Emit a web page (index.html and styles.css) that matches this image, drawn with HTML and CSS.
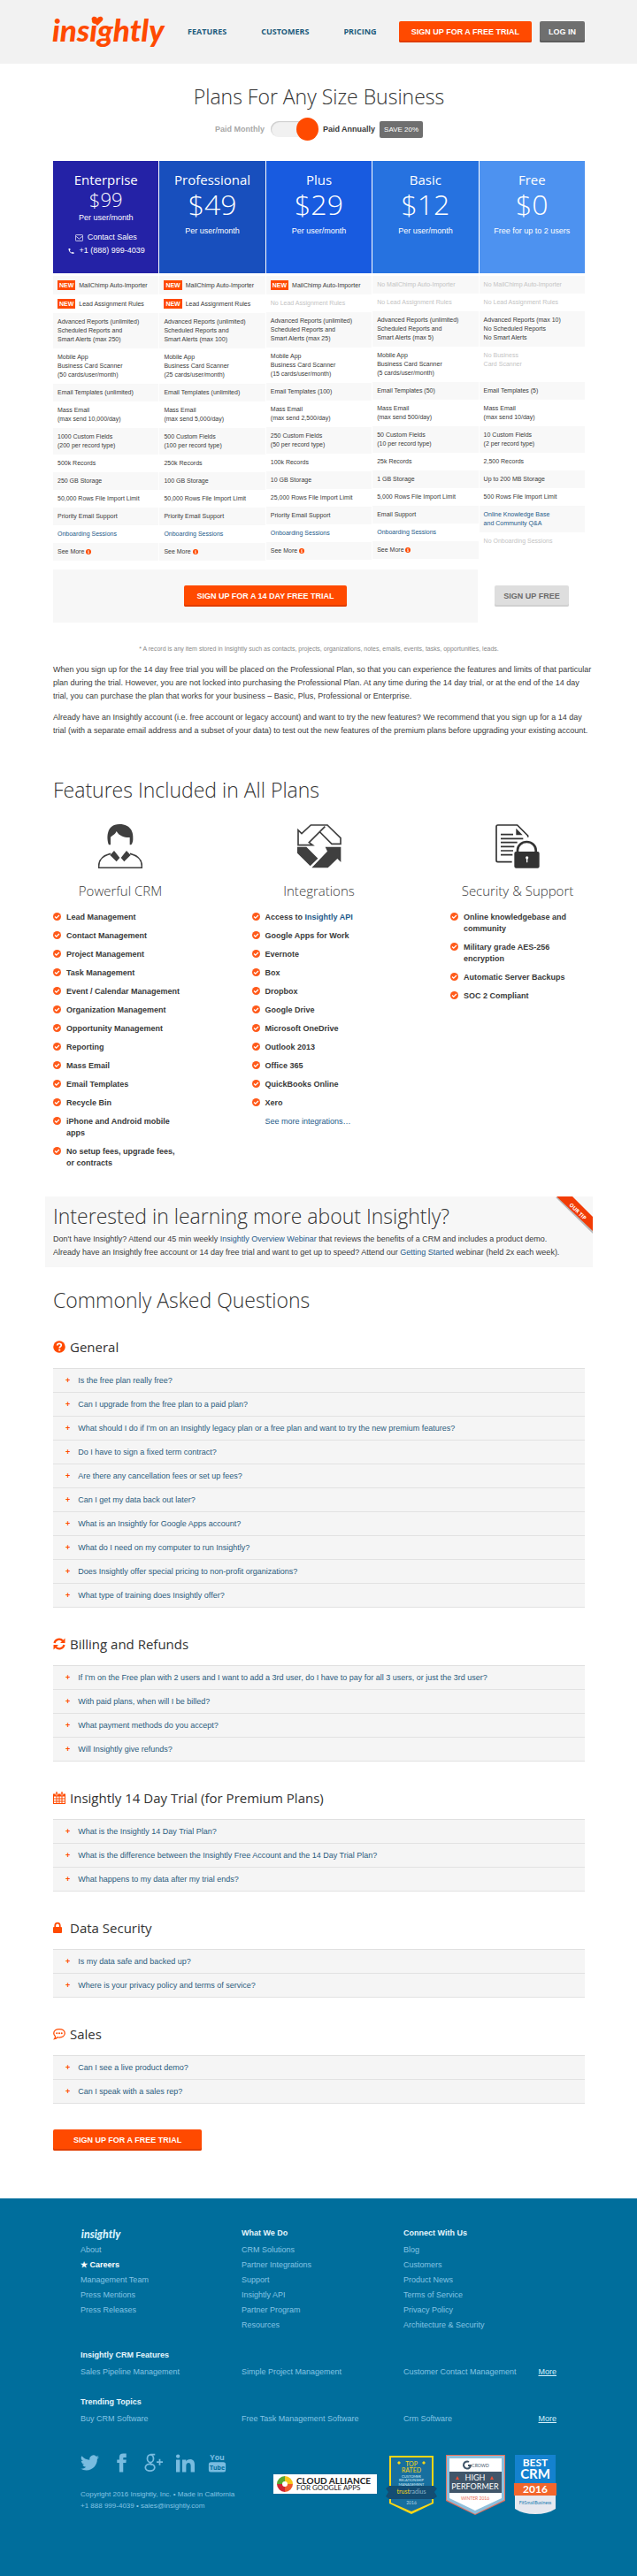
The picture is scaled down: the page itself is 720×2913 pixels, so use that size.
FILE: index.html
```html
<!DOCTYPE html>
<html lang="en">
<head>
<meta charset="utf-8">
<meta name="viewport" content="width=device-width, initial-scale=1">
<title>Insightly Pricing</title>
<link rel="stylesheet" href="styles.css">
</head>
<body>
<svg class="defs" aria-hidden="true">
  <symbol id="check" viewBox="0 0 24 24"><circle cx="12" cy="12" r="12" fill="currentColor"/><path d="M5.500 12l4.500 4.500L18.500 8" fill="none" stroke="#fff" stroke-width="3.500"/></symbol>
  <symbol id="info" viewBox="0 0 24 24"><circle cx="12" cy="12" r="12" fill="currentColor"/><path d="M10 5h4v4h-4zM8 10h6v7h2v2H8v-2h2v-5H8z" fill="#fff"/></symbol>
</svg>

<header class="header">
  <a class="logo" href="#" aria-label="Insightly">
    <svg viewBox="0 0 126 54"><text x="-1" y="38">insightly</text><path d="M50 20l-6-6c-2-4 4-6 6-2 2-4 8-2 6 2z"/></svg>
  </a>
  <nav class="nav"><a href="#">FEATURES</a><a href="#">CUSTOMERS</a><a href="#">PRICING</a></nav>
  <div class="actions"><a class="btn" href="#">SIGN UP FOR A FREE TRIAL</a><a class="btn dark" href="#">LOG IN</a></div>
</header>

<main class="main">
  <h1 class="title">Plans For Any Size Business</h1>
  <div class="billing">
    <span class="muted">Paid Monthly</span>
    <label class="switch"><input type="checkbox" checked aria-label="Paid annually"><span class="knob"></span></label>
    <span>Paid Annually</span><span class="save">SAVE 20%</span>
  </div>

  <section class="plans">
    <article class="plan">
      <header class="plan-head enterprise"><h2>Enterprise</h2><p class="price small">$99</p><p>Per user/month</p>
        <a class="contact first" href="#"><svg viewBox="0 0 24 20" fill="none" stroke="currentColor" stroke-width="2"><rect x="1" y="1" width="22" height="18" rx="2"/><path d="M2 5l10 8 10-8"/></svg>Contact Sales</a>
        <a class="contact" href="#"><svg viewBox="0 0 24 24"><path fill="currentColor" d="M6.600 10.800c1.400 2.800 3.800 5.100 6.600 6.600l2.200-2.200c.3-.3.7-.4 1-.2 1.100.4 2.300.6 3.600.6.600 0 1 .4 1 1V20c0 .6-.4 1-1 1C10.600 21 3 13.400 3 4c0-.6.4-1 1-1h3.500c.6 0 1 .4 1 1 0 1.200.2 2.400.6 3.600.1.300 0 .7-.2 1z"/></svg>+1 (888) 999-4039</a>
      </header>
      <ul>
        <li><b class="new">NEW</b> MailChimp Auto-Importer</li>
        <li><b class="new">NEW</b> Lead Assignment Rules</li>
        <li>Advanced Reports (unlimited)<br>Scheduled Reports and<br>Smart Alerts (max 250)</li>
        <li>Mobile App<br>Business Card Scanner<br>(50 cards/user/month)</li>
        <li>Email Templates (unlimited)</li>
        <li>Mass Email<br>(max send 10,000/day)</li>
        <li>1000 Custom Fields<br>(200 per record type)</li>
        <li>500k Records</li><li>250 GB Storage</li><li>50,000 Rows File Import Limit</li><li>Priority Email Support</li>
        <li><a href="#">Onboarding Sessions</a></li>
        <li>See More <svg class="info"><use href="#info"/></svg></li>
      </ul>
    </article>
    <article class="plan">
      <header class="plan-head professional"><h2>Professional</h2><p class="price">$49</p><p>Per user/month</p></header>
      <ul>
        <li><b class="new">NEW</b> MailChimp Auto-Importer</li>
        <li><b class="new">NEW</b> Lead Assignment Rules</li>
        <li>Advanced Reports (unlimited)<br>Scheduled Reports and<br>Smart Alerts (max 100)</li>
        <li>Mobile App<br>Business Card Scanner<br>(25 cards/user/month)</li>
        <li>Email Templates (unlimited)</li>
        <li>Mass Email<br>(max send 5,000/day)</li>
        <li>500 Custom Fields<br>(100 per record type)</li>
        <li>250k Records</li><li>100 GB Storage</li><li>50,000 Rows File Import Limit</li><li>Priority Email Support</li>
        <li><a href="#">Onboarding Sessions</a></li>
        <li>See More <svg class="info"><use href="#info"/></svg></li>
      </ul>
    </article>
    <article class="plan">
      <header class="plan-head plus"><h2>Plus</h2><p class="price">$29</p><p>Per user/month</p></header>
      <ul>
        <li><b class="new">NEW</b> MailChimp Auto-Importer</li>
        <li class="off">No Lead Assignment Rules</li>
        <li>Advanced Reports (unlimited)<br>Scheduled Reports and<br>Smart Alerts (max 25)</li>
        <li>Mobile App<br>Business Card Scanner<br>(15 cards/user/month)</li>
        <li>Email Templates (100)</li>
        <li>Mass Email<br>(max send 2,500/day)</li>
        <li>250 Custom Fields<br>(50 per record type)</li>
        <li>100k Records</li><li>10 GB Storage</li><li>25,000 Rows File Import Limit</li><li>Priority Email Support</li>
        <li><a href="#">Onboarding Sessions</a></li>
        <li>See More <svg class="info"><use href="#info"/></svg></li>
      </ul>
    </article>
    <article class="plan">
      <header class="plan-head basic"><h2>Basic</h2><p class="price">$12</p><p>Per user/month</p></header>
      <ul>
        <li class="off">No MailChimp Auto-Importer</li>
        <li class="off">No Lead Assignment Rules</li>
        <li>Advanced Reports (unlimited)<br>Scheduled Reports and<br>Smart Alerts (max 5)</li>
        <li>Mobile App<br>Business Card Scanner<br>(5 cards/user/month)</li>
        <li>Email Templates (50)</li>
        <li>Mass Email<br>(max send 500/day)</li>
        <li>50 Custom Fields<br>(10 per record type)</li>
        <li>25k Records</li><li>1 GB Storage</li><li>5,000 Rows File Import Limit</li><li>Email Support</li>
        <li><a href="#">Onboarding Sessions</a></li>
        <li>See More <svg class="info"><use href="#info"/></svg></li>
      </ul>
    </article>
    <article class="plan">
      <header class="plan-head free"><h2>Free</h2><p class="price">$0</p><p>Free for up to 2 users</p></header>
      <ul>
        <li class="off">No MailChimp Auto-Importer</li>
        <li class="off">No Lead Assignment Rules</li>
        <li>Advanced Reports (max 10)<br>No Scheduled Reports<br>No Smart Alerts</li>
        <li class="off">No Business<br>Card Scanner<br>&nbsp;</li>
        <li>Email Templates (5)</li>
        <li>Mass Email<br>(max send 10/day)</li>
        <li>10 Custom Fields<br>(2 per record type)</li>
        <li>2,500 Records</li><li>Up to 200 MB Storage</li><li>500 Rows File Import Limit</li>
        <li><a href="#">Online Knowledge Base<br>and Community Q&amp;A</a></li>
        <li class="off">No Onboarding Sessions</li>
      </ul>
    </article>
  </section>
  <div class="signup">
    <div class="signup-paid"><a class="btn wide" href="#">SIGN UP FOR A 14 DAY FREE TRIAL</a></div>
    <div class="signup-free"><a class="btn light" href="#">SIGN UP FREE</a></div>
  </div>
  <p class="note">* A record is any item stored in Insightly such as contacts, projects, organizations, notes, emails, events, tasks, opportunities, leads.</p>
  <p class="copy">When you sign up for the 14 day free trial you will be placed on the Professional Plan, so that you can experience the features and limits of that particular<br>plan during the trial. However, you are not locked into purchasing the Professional Plan. At any time during the 14 day trial, or at the end of the 14 day<br>trial, you can purchase the plan that works for your business – Basic, Plus, Professional or Enterprise.</p>
  <p class="copy">Already have an Insightly account (i.e. free account or legacy account) and want to try the new features? We recommend that you sign up for a 14 day<br>trial (with a separate email address and a subset of your data) to test out the new features of the premium plans before upgrading your existing account.</p>

  <h2 class="title section-title">Features Included in All Plans</h2>
  <section class="features">
    <div class="feature">
      <svg class="art" viewBox="0 0 150 150"><g fill="#3f3f3f"><path d="M36 70C28 50 26 0 72 0c40 0 48 30 46 50 0 10-4 20-8 20h-3V45c-15 1-35-3-45-21-4 11-18 16-20 21v25z"/><path d="M54 90L40 105l22 22 11-13zM96 90l14 15-22 22-11-13z"/><path d="M42 100C12 108 0 122 2 148h146c2-26-10-40-40-48" fill="none" stroke="#3f3f3f" stroke-width="5"/></g></svg>
      <h3>Powerful CRM</h3>
      <ul>
        <li><svg><use href="#check"/></svg>Lead Management</li><li><svg><use href="#check"/></svg>Contact Management</li><li><svg><use href="#check"/></svg>Project Management</li><li><svg><use href="#check"/></svg>Task Management</li><li><svg><use href="#check"/></svg>Event / Calendar Management</li><li><svg><use href="#check"/></svg>Organization Management</li><li><svg><use href="#check"/></svg>Opportunity Management</li><li><svg><use href="#check"/></svg>Reporting</li><li><svg><use href="#check"/></svg>Mass Email</li><li><svg><use href="#check"/></svg>Email Templates</li><li><svg><use href="#check"/></svg>Recycle Bin</li><li><svg><use href="#check"/></svg>iPhone and Android mobile<br>apps</li><li><svg><use href="#check"/></svg>No setup fees, upgrade fees,<br>or contracts</li>
      </ul>
    </div>
    <div class="feature">
      <svg class="art" viewBox="0 0 150 150"><g fill="none" stroke="#3f3f3f" stroke-width="5"><path d="M94 8L40 62l12 9H3V20l12 12L46 3h56l45 44v20h-30L77 27"/></g><path fill="#3f3f3f" d="M0 77h31l39 39-26 26L0 98zM95 77h53v52l-12-12-32 31H49l53-56z"/></svg>
      <h3>Integrations</h3>
      <ul>
        <li><svg><use href="#check"/></svg><span>Access to <a href="#">Insightly API</a></span></li><li><svg><use href="#check"/></svg>Google Apps for Work</li><li><svg><use href="#check"/></svg>Evernote</li><li><svg><use href="#check"/></svg>Box</li><li><svg><use href="#check"/></svg>Dropbox</li><li><svg><use href="#check"/></svg>Google Drive</li><li><svg><use href="#check"/></svg>Microsoft OneDrive</li><li><svg><use href="#check"/></svg>Outlook 2013</li><li><svg><use href="#check"/></svg>Office 365</li><li><svg><use href="#check"/></svg>QuickBooks Online</li><li><svg><use href="#check"/></svg>Xero</li><li class="more"><a href="#">See more integrations…</a></li>
      </ul>
    </div>
    <div class="feature">
      <svg class="art" viewBox="0 0 150 150"><g fill="none" stroke="#333" stroke-width="5"><path d="M56 128H8q-5 0-5-5V8q0-5 5-5h66l36 36v5M18 35h42M18 49h76M18 62h56M18 76h46M18 90h42M18 104h40"/><path d="M75 96V88a31 28 0 0162 0v8" stroke-width="8"/></g><path fill="#333" d="M70 14l22 23H70z"/><rect x="64" y="93" width="85" height="56" rx="6" fill="#333"/><path d="M102 114a5 5 0 1110 0l-3 5v11h-4v-11z" fill="#fff"/></svg>
      <h3>Security &amp; Support</h3>
      <ul>
        <li><svg><use href="#check"/></svg>Online knowledgebase and<br>community</li><li><svg><use href="#check"/></svg>Military grade AES-256<br>encryption</li><li><svg><use href="#check"/></svg>Automatic Server Backups</li><li><svg><use href="#check"/></svg>SOC 2 Compliant</li>
      </ul>
    </div>
  </section>

  <section class="tip">
    <h2 class="title">Interested in learning more about Insightly?</h2>
    <p>Don't have Insightly? Attend our 45 min weekly <a href="#">Insightly Overview Webinar</a> that reviews the benefits of a CRM and includes a product demo.<br>Already have an Insightly free account or 14 day free trial and want to get up to speed? Attend our <a href="#">Getting Started</a> webinar (held 2x each week).</p>
    <svg class="ribbon" viewBox="0 0 42 42"><path d="M0 1h4l38 37v4z" fill="#b9b9b9"/><path d="M1 0h18l23 23v16z" fill="#f23c06"/><text x="25" y="19" transform="rotate(44 25 17)">OUR TIP</text></svg>
  </section>

  <h2 class="title faq-title">Commonly Asked Questions</h2>
  <section class="faq">
    <h3><svg viewBox="0 0 28 28"><circle cx="14" cy="14" r="13.500" fill="#ff4a00"/><path d="M9.500 11q0-4.500 4.500-4.500t4.500 4q0 2-2.500 3.500-1.500 1-1.500 3" fill="none" stroke="#fff" stroke-width="3.500"/><path d="M12.500 19.500h4v3.500h-4z" fill="#fff"/></svg>General</h3>
    <ul>
      <li><button type="button">Is the free plan really free?</button></li>
      <li><button type="button">Can I upgrade from the free plan to a paid plan?</button></li>
      <li><button type="button">What should I do if I'm on an Insightly legacy plan or a free plan and want to try the new premium features?</button></li>
      <li><button type="button">Do I have to sign a fixed term contract?</button></li>
      <li><button type="button">Are there any cancellation fees or set up fees?</button></li>
      <li><button type="button">Can I get my data back out later?</button></li>
      <li><button type="button">What is an Insightly for Google Apps account?</button></li>
      <li><button type="button">What do I need on my computer to run Insightly?</button></li>
      <li><button type="button">Does Insightly offer special pricing to non-profit organizations?</button></li>
      <li><button type="button">What type of training does Insightly offer?</button></li>
    </ul>
  </section>
  <section class="faq">
    <h3><svg viewBox="0 0 28 28"><path d="M3 12a11 11 0 0119-5M25 16a11 11 0 01-19 5" fill="none" stroke="#ff4a00" stroke-width="4.500"/><path d="M27 1v11H16zM1 27V16h11z" fill="#ff4a00"/></svg>Billing and Refunds</h3>
    <ul>
      <li><button type="button">If I'm on the Free plan with 2 users and I want to add a 3rd user, do I have to pay for all 3 users, or just the 3rd user?</button></li>
      <li><button type="button">With paid plans, when will I be billed?</button></li>
      <li><button type="button">What payment methods do you accept?</button></li>
      <li><button type="button">Will Insightly give refunds?</button></li>
    </ul>
  </section>
  <section class="faq">
    <h3><svg viewBox="0 0 28 28"><path d="M0 5h28v23H0z" fill="#ff4a00"/><path d="M6 0h4v8H6zM18 0h4v8h-4z" fill="#ff4a00" stroke="#fff"/><path d="M2 11h5v4H2zM9 11h4v4H9zM15 11h4v4h-4zM21 11h5v4h-5zM2 17h5v4H2zM9 17h4v4H9zM15 17h4v4h-4zM21 17h5v4h-5zM2 23h5v3H2zM9 23h4v3H9zM15 23h4v3h-4zM21 23h5v3h-5z" fill="#fff"/></svg>Insightly 14 Day Trial (for Premium Plans)</h3>
    <ul>
      <li><button type="button">What is the Insightly 14 Day Trial Plan?</button></li>
      <li><button type="button">What is the difference between the Insightly Free Account and the 14 Day Trial Plan?</button></li>
      <li><button type="button">What happens to my data after my trial ends?</button></li>
    </ul>
  </section>
  <section class="faq">
    <h3><svg viewBox="0 0 28 28"><rect y="12" width="20" height="14" rx="2" fill="#ff4a00"/><path d="M4.500 13V9a5.500 6 0 0111 0v4" fill="none" stroke="#ff4a00" stroke-width="3.500"/></svg>Data Security</h3>
    <ul>
      <li><button type="button">Is my data safe and backed up?</button></li>
      <li><button type="button">Where is your privacy policy and terms of service?</button></li>
    </ul>
  </section>
  <section class="faq">
    <h3><svg viewBox="0 0 28 28"><path d="M14 3c7 0 12.500 4 12.500 9.500S21 22 14 22q-2 0-4-.5Q7 25 3 25.500q2-2.500 2-6Q1.500 16.500 1.500 12.500C1.500 7 7 3 14 3z" fill="none" stroke="#ff4a00" stroke-width="2.500"/><g fill="#ff4a00"><circle cx="8.500" cy="12.500" r="2"/><circle cx="14" cy="12.500" r="2"/><circle cx="19.500" cy="12.500" r="2"/></g></svg>Sales</h3>
    <ul>
      <li><button type="button">Can I see a live product demo?</button></li>
      <li><button type="button">Can I speak with a sales rep?</button></li>
    </ul>
  </section>
  <a class="btn trial" href="#">SIGN UP FOR A FREE TRIAL</a>
</main>

<footer class="footer">
  <div class="links">
    <div class="col">
      <a class="foot-logo" href="#" aria-label="Insightly"><svg viewBox="0 0 126 54"><text x="0" y="40">insightly</text></svg></a>
      <a href="#">About</a><a class="strong" href="#">★ Careers</a><a href="#">Management Team</a><a href="#">Press Mentions</a><a href="#">Press Releases</a>
    </div>
    <div class="col"><h4>What We Do</h4><a href="#">CRM Solutions</a><a href="#">Partner Integrations</a><a href="#">Support</a><a href="#">Insightly API</a><a href="#">Partner Program</a><a href="#">Resources</a></div>
    <div class="col"><h4>Connect With Us</h4><a href="#">Blog</a><a href="#">Customers</a><a href="#">Product News</a><a href="#">Terms of Service</a><a href="#">Privacy Policy</a><a href="#">Architecture &amp; Security</a></div>
  </div>
  <div class="topic">
    <h4>Insightly CRM Features</h4>
    <div class="links"><a href="#">Sales Pipeline Management</a><a href="#">Simple Project Management</a><div class="last"><a href="#">Customer Contact Management</a><a class="see" href="#">More</a></div></div>
  </div>
  <div class="topic">
    <h4>Trending Topics</h4>
    <div class="links"><a href="#">Buy CRM Software</a><a href="#">Free Task Management Software</a><div class="last"><a href="#">Crm Software</a><a class="see" href="#">More</a></div></div>
  </div>
  <div class="bottom">
    <div>
      <div class="social">
        <a href="#" aria-label="Twitter"><svg viewBox="0 0 24 24"><path d="M23.950 4.570a10 10 0 01-2.820.77 4.960 4.960 0 002.160-2.720c-.95.56-2 .97-3.130 1.190a4.920 4.920 0 00-8.380 4.480C7.690 8.100 4.070 6.130 1.640 3.160a4.920 4.920 0 001.520 6.570 4.900 4.900 0 01-2.230-.61v.06a4.920 4.920 0 003.950 4.830 5 5 0 01-2.210.08 4.940 4.940 0 004.600 3.420A9.870 9.870 0 010 19.540a13.990 13.990 0 007.550 2.210c9.050 0 14-7.500 14-13.980 0-.21 0-.42-.02-.63a9.940 9.940 0 002.460-2.550z"/></svg></a>
        <a href="#" aria-label="Facebook"><svg viewBox="0 0 24 24"><path d="M9 8H6v4h3v12h5V12h3.600l.4-4h-4V6.300c0-1 .2-1.300 1.100-1.300H18V0h-3.800C10.600 0 9 1.600 9 4.600z"/></svg></a>
        <a href="#" aria-label="Google Plus"><svg viewBox="0 0 24 24"><g fill="none" stroke="currentColor" stroke-width="2"><ellipse cx="8" cy="6.500" rx="4" ry="5"/><ellipse cx="7.500" cy="18" rx="6" ry="4.500"/><path d="M8 1.200h6M9 11.500q-3 2 1 3M20 7v8M16 11h8"/></g></svg></a>
        <a href="#" aria-label="LinkedIn"><svg viewBox="0 0 24 24"><path d="M4.980 3.500a2.500 2.500 0 11-5 0 2.500 2.500 0 015 0zM5 8H0v16h5zM13 8H8v16h5v-8.400c0-4.670 6-5 6 0V24h5V13.900c0-7.900-8.900-7.600-11-3.700z"/></svg></a>
        <a href="#" aria-label="YouTube"><svg viewBox="0 0 24 24"><text class="you" x="12" y="9">You</text><rect x="1" y="11" width="22" height="13" rx="3"/><text class="tube" x="12" y="21">Tube</text></svg></a>
      </div>
      <p class="legal">Copyright 2016 Insightly, Inc. • Made in California<br>+1 888 999-4039 • sales@insightly.com</p>
    </div>
    <div class="badges">
      <svg class="cloud" viewBox="0 0 117 22"><path d="M0 0h117v22H0z" fill="#fff"/><g fill="none" stroke-width="6"><path d="M13 5a6 6 0 016 6" stroke="#f6c51d"/><path d="M19 11a6 6 0 01-6 6" stroke="#f0592b"/><path d="M13 17a6 6 0 01-6-6" stroke="#cf2332"/><path d="M7 11a6 6 0 016-6" stroke="#5aa832"/></g><text x="26" y="11" class="cloud-a">CLOUD ALLIANCE</text><text x="26" y="18" class="cloud-b">FOR GOOGLE APPS</text></svg>
      <svg class="trust" viewBox="0 0 58 68"><path d="M4 1h50v54L29 67 4 55z" fill="#f9d616"/><path d="M6 3h46v51L29 64 6 54z" fill="#176f9f"/><path d="M0 38l4-3h50l4 3-3 4 3 5-4 3H4l-4-3 3-5z" fill="#134d73"/><text x="29" y="13" fill="#f9d616" class="t7">TOP</text><text x="29" y="20" fill="#f9d616" class="t7">RATED</text><text x="29" y="26" class="t4">CUSTOMER</text><text x="29" y="30" class="t4">RELATIONSHIP</text><text x="29" y="35" class="t4">MANAGEMENT</text><text x="29" y="44" class="t7" fill="#8fb7cc"><tspan fill="#f9d616">trust</tspan>radius</text><text x="29" y="56" class="t5">2016</text><path d="M13 9l2 2 2-2-2-2zM41 9l2 2 2-2-2-2z" fill="#f9d616"/></svg>
      <svg class="crowd" viewBox="0 0 67 68"><path d="M0 0h67v52L33 68 0 52z" fill="#e76d59"/><path d="M1 1h65v50L33 67 1 51z" fill="#8fc0dc"/><path d="M4 4h59v45L33 63 4 49z" fill="#fff"/><path d="M4 19h59v24H4z" fill="#41566a"/><path d="M26 8a4 4 0 102 4h-3" fill="none" stroke="#41566a" stroke-width="2"/><text x="39" y="14" class="t5" fill="#41566a">CROWD</text><text x="33" y="29" class="t8" fill="#fff">HIGH</text><text x="33" y="39" class="t8" fill="#fff">PERFORMER</text><text x="33" y="51" class="t5" fill="#e76d59">WINTER 2016</text><path d="M13 24l2 4h-4zM52 24l2 4h-4z" fill="#ee5035"/></svg>
      <svg class="best" viewBox="0 0 48 68"><path d="M1 0h46v32H1z" fill="#1482cf"/><path d="M1 46h46v15q-9 6-23 6T1 61z" fill="#e6e8ef"/><path d="M0 32h48v14H0z" fill="#f3662c"/><text x="24" y="13" class="t11">BEST</text><text x="24" y="27" class="t13">CRM</text><text x="24" y="43" class="t11">2016</text><text x="24" y="56" class="t5" fill="#177bb0">FitSmallBusiness</text></svg>
    </div>
  </div>
</footer>
</body>
</html>
```

FILE: styles.css
```css
* { box-sizing: border-box; }
body { margin: 0; background: #fff; color: #3a3a3a; font: 9px/15px "Liberation Sans", Arial, sans-serif; }
h1, h2, h3, h4, p, ul { margin: 0; padding: 0; font-weight: 400; }
ul { list-style: none; }
a { color: #1d5a8a; text-decoration: none; }
.defs { position: absolute; width: 0; height: 0; }

.header { display: flex; align-items: center; height: 72px; padding: 0 59px 0 60px; background: #f2f2f2; }
.logo { width: 126px; height: 54px; margin-right: 26px; }
.logo svg { display: block; width: 100%; height: 100%; fill: #ff4a00; overflow: visible; }
.logo text, .foot-logo text { font: italic 900 35px Lato, sans-serif; }
.nav { display: flex; gap: 39px; font: 700 9px/24px "Open Sans", sans-serif; }
.nav a { color: #1d5b7c; }
.actions { display: flex; gap: 9px; margin-left: auto; white-space: nowrap; }
.btn { display: inline-block; padding: 0 14px; border-radius: 2px; background: #ff4a00; box-shadow: inset 0 -2px #e03c00; color: #fff; font-weight: 700; line-height: 24px; text-align: center; }
.dark { padding: 0 10px; background: #6f6f6f; box-shadow: inset 0 -2px #5c5c5c; }
.light { padding: 0 10px; background: #dedede; box-shadow: inset 0 -2px #d0d0d0; color: #6b6b6b; }

.main { padding: 22px 59px 54px 60px; }
.title { color: #333; font: 300 23px/30px "Open Sans", sans-serif; }
h1.title { text-align: center; }
.billing { display: flex; align-items: center; justify-content: center; gap: 5px; height: 26px; margin-top: 9px; font-weight: 700; }
.muted { color: #a8a8a8; }
.switch { position: relative; width: 54px; height: 18px; margin-left: 2px; }
.switch input { display: block; width: 46px; height: 18px; margin: 0; appearance: none; border-radius: 9px; background: #f1f1f1; box-shadow: inset 1px 1px 1px #ccc; }
.knob { position: absolute; top: -4px; right: 0; width: 25px; height: 26px; border-radius: 50%; background: #ff4a00; }
.save { padding: 0 5px; border-radius: 2px; background: #6f6f6f; color: #fff; font-size: 8px; font-weight: 400; line-height: 19px; }

.plans { display: grid; grid-template-columns: repeat(5, 1fr); gap: 1px; margin-top: 23px; }
.plan-head { height: 127px; padding-top: 10px; margin-bottom: 3px; color: #fff; text-align: center; }
.plan-head h2 { font: 400 15px/22px "Open Sans", sans-serif; }
.price { margin-bottom: 6px; font: 300 32px/34px "Open Sans", sans-serif; }
.price.small { margin-bottom: 3px; font-size: 22px; line-height: 22px; }
.enterprise { background: #2422a6; }
.professional { background: #184fbd; }
.plus { background: #185be0; }
.basic { background: #2672e0; }
.free { background: #4d92f0; }
.contact { display: flex; align-items: center; justify-content: center; gap: 5px; color: #fff; }
.contact.first { margin-top: 7px; }
.contact svg { width: 9px; height: 8px; }
.plan li { padding: 5px; font-size: 7px; line-height: 10px; white-space: nowrap; }
.plan li:nth-child(odd) { background: #f8f8f8; }
.new { display: inline-block; margin-right: 2px; padding: 0 2px; background: #ff4a00; color: #fff; line-height: 11px; }
.plan .off { color: #c4c4c4; }
.info { width: 6px; height: 6px; color: #ff4a00; vertical-align: -1px; }
.signup { display: grid; grid-template-columns: 4fr 1fr; gap: 1px; margin-top: 10px; text-align: center; }
.signup-paid { padding: 18px; background: #f7f7f7; }
.signup-free { padding: 18px 0; }
.note { margin: 22px 0 9px; color: #888; font-size: 7px; text-align: center; }
.copy { margin-bottom: 9px; white-space: nowrap; }
.section-title { margin-top: 44px; }

.features { display: flex; justify-content: space-between; margin-top: 24px; }
.feature { width: 152px; }
.art { display: block; width: 50px; height: 50px; margin: 0 auto; }
.feature h3 { margin: 14px 0 13px; font: 300 15px/22px "Open Sans", sans-serif; text-align: center; }
.feature ul { display: grid; gap: 8px; font-weight: 700; line-height: 13px; }
.feature li { display: flex; align-items: flex-start; gap: 6px; white-space: nowrap; }
.feature li svg { flex: none; width: 9px; height: 9px; margin-top: 1px; color: #ff5a1a; }
.feature .more { padding-left: 15px; font-weight: 400; }

.tip { position: relative; margin: 31px -9px 0; padding: 7px 9px 9px; background: #f7f7f7; }
.tip .title { padding-bottom: 4px; }
.ribbon { position: absolute; top: 0; right: 0; width: 42px; height: 42px; }
.ribbon text { fill: #fff; font: 700 6px "Open Sans", sans-serif; text-anchor: middle; }
.faq-title { margin: 22px 0 26px; }
.faq { margin-bottom: 29px; }
.faq h3 { display: flex; align-items: center; gap: 5px; margin-bottom: 12px; color: #333; font: 400 15px/24px "Open Sans", sans-serif; }
.faq h3 svg { width: 14px; height: 14px; }
.faq ul { border-top: 1px solid #e0e0e0; }
.faq li { border-bottom: 1px solid #e2e2e2; background: #f5f5f5; }
.faq button { display: flex; gap: 9px; width: 100%; padding: 0 14px; border: 0; background: none; color: #2b5c7d; font: 9px/26px "Liberation Sans", Arial, sans-serif; text-align: left; }
.faq button::before { content: "+"; color: #ff4a00; font-weight: 700; }
.trial { padding: 0 23px; }

.footer { padding: 31px 91px 71px; background: #006e9c; font-size: 9px; line-height: 17px; }
.footer a { color: #84c4e4; }
.footer h4 { color: #e4f5fc; font-weight: 700; }
.links { display: grid; grid-template-columns: 182px 183px 1fr; }
.col { display: flex; flex-direction: column; }
.col h4 { margin-bottom: 2px; }
.foot-logo { height: 19px; }
.foot-logo svg { display: block; width: 46px; height: 19px; fill: #d5f0fb; }
.footer .strong { color: #fff; font-weight: 700; }
.topic { margin-top: 17px; }
.topic h4 { margin-bottom: 2px; }
.last { display: flex; justify-content: space-between; white-space: nowrap; }
.footer .see { color: #d5f0fb; text-decoration: underline; }
.bottom { display: flex; justify-content: space-between; margin-top: 29px; }
.social { display: flex; gap: 15px; }
.social svg { display: block; width: 21px; height: 24px; fill: #78bce0; color: #78bce0; }
.you { font: 700 10px "Open Sans", sans-serif; text-anchor: middle; }
.tube { font: 700 8px "Open Sans", sans-serif; text-anchor: middle; fill: #006e9c; }
.legal { margin-top: 17px; color: #84c4e4; font-size: 8px; line-height: 13px; }
.badges { display: flex; gap: 10px; padding-top: 3px; }
.badges text { font-family: Lato, sans-serif; text-anchor: middle; }
.badges .cloud-a, .badges .cloud-b { text-anchor: start; fill: #222; }
.cloud { width: 117px; height: 22px; margin-top: 22px; }
.cloud-a { font-size: 10px; font-weight: 700; }
.cloud-b { font-size: 8px; }
.trust { width: 58px; height: 68px; }
.crowd { width: 67px; height: 68px; }
.best { width: 48px; height: 68px; }
.t4 { font-size: 4px; fill: #d6ebf5; }
.t5 { font-size: 5px; }
.trust .t5 { fill: #b8d5e3; }
.t7 { font-size: 7px; }
.t8 { font-size: 9px; }
.t11 { font-size: 12px; font-weight: 700; fill: #fff; }
.t13 { font-size: 15px; font-weight: 700; fill: #fff; }
```
